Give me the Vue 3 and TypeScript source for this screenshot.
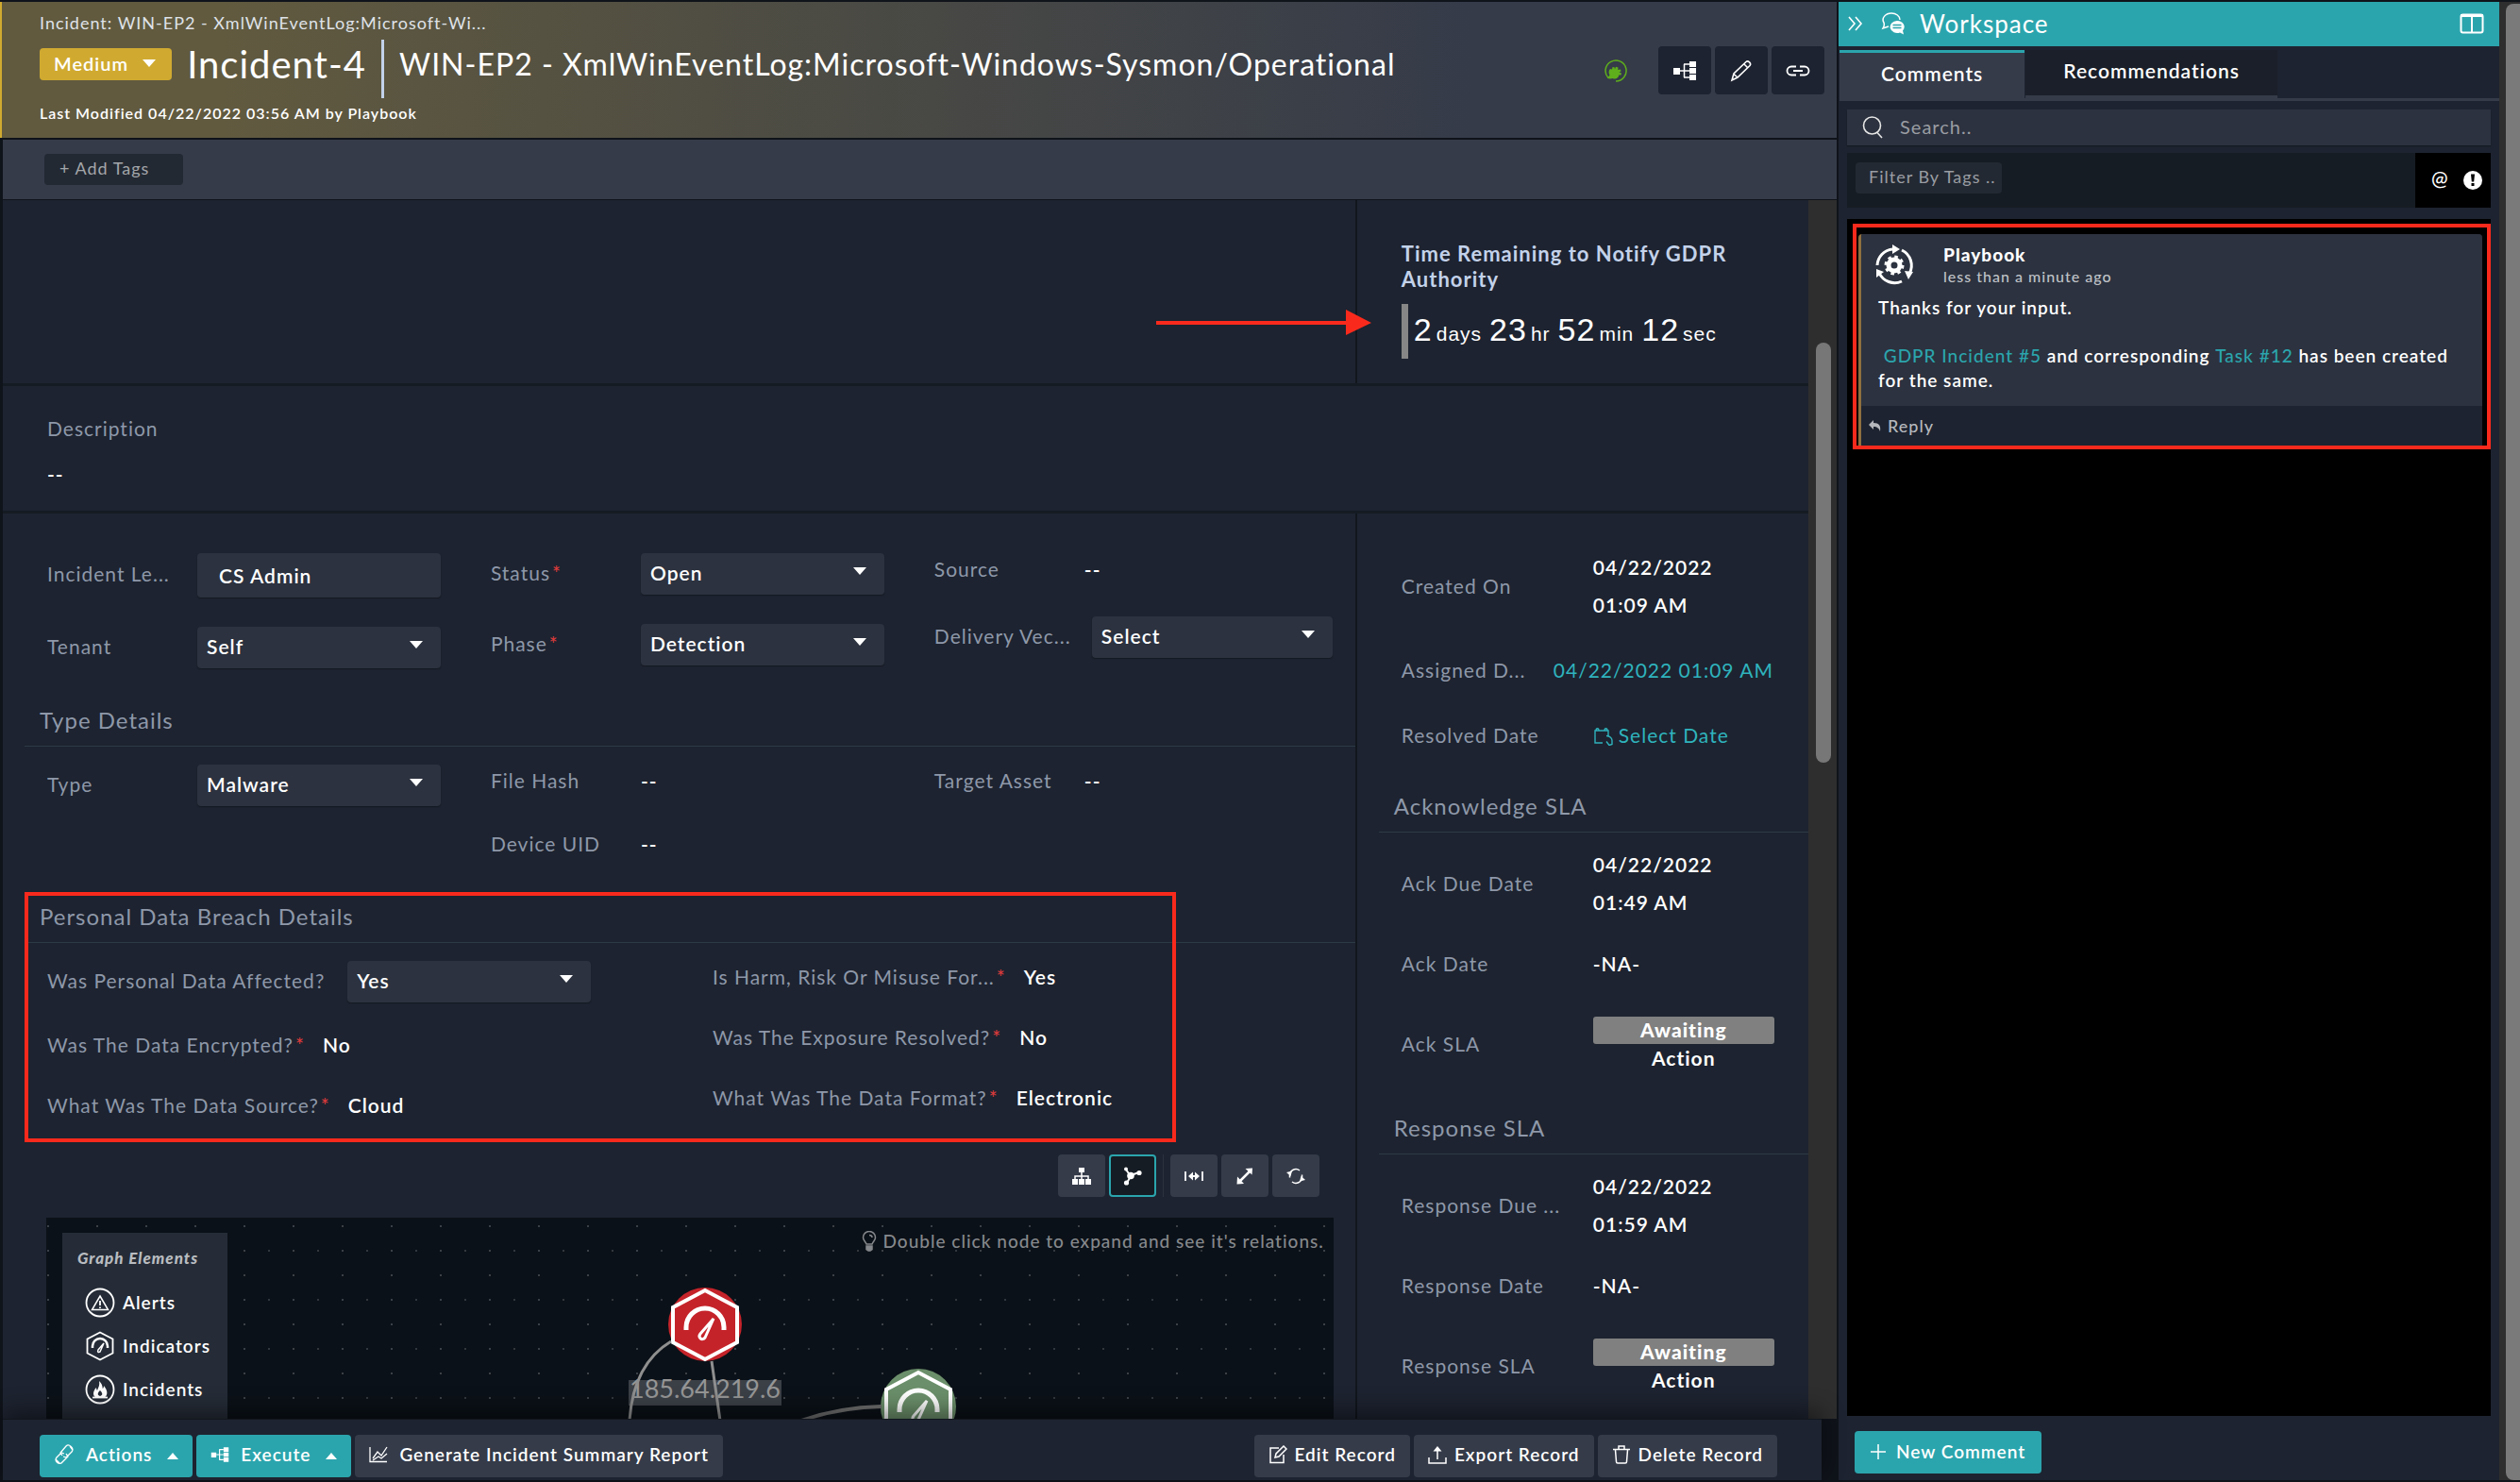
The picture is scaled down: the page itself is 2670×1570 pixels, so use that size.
<script setup lang="ts">
import { ref } from 'vue'

interface Field {
  id: string
  label: string
  value: string
  kind: 'text' | 'select' | 'input'
  required?: boolean
}

interface SideField {
  label: string
  value: string
  kind: 'dual' | 'text' | 'wide' | 'pick' | 'badge'
}

const mainColumns: Field[][] = [
  [
    { id: 'lead', label: 'Incident Le...', value: 'CS Admin', kind: 'input' },
    { id: 'tenant', label: 'Tenant', value: 'Self', kind: 'select' },
  ],
  [
    { id: 'status', label: 'Status', value: 'Open', kind: 'select', required: true },
    { id: 'phase', label: 'Phase', value: 'Detection', kind: 'select', required: true },
  ],
  [
    { id: 'source', label: 'Source', value: '--', kind: 'text' },
    { id: 'vector', label: 'Delivery Vec...', value: 'Select', kind: 'select' },
  ],
]

const typeColumns: Field[][] = [
  [{ id: 'type', label: 'Type', value: 'Malware', kind: 'select' }],
  [
    { id: 'hash', label: 'File Hash', value: '--', kind: 'text' },
    { id: 'uid', label: 'Device UID', value: '--', kind: 'text' },
  ],
  [{ id: 'asset', label: 'Target Asset', value: '--', kind: 'text' }],
]

const breachColumns: Field[][] = [
  [
    { id: 'affected', label: 'Was Personal Data Affected?', value: 'Yes', kind: 'select' },
    { id: 'encrypted', label: 'Was The Data Encrypted?', value: 'No', kind: 'text', required: true },
    { id: 'datasource', label: 'What Was The Data Source?', value: 'Cloud', kind: 'text', required: true },
  ],
  [
    { id: 'harm', label: 'Is Harm, Risk Or Misuse For...', value: 'Yes', kind: 'text', required: true },
    { id: 'exposure', label: 'Was The Exposure Resolved?', value: 'No', kind: 'text', required: true },
    { id: 'format', label: 'What Was The Data Format?', value: 'Electronic', kind: 'text', required: true },
  ],
]

const sideGroups: { title: string; fields: SideField[] }[] = [
  {
    title: '',
    fields: [
      { label: 'Created On', value: '04/22/2022|01:09 AM', kind: 'dual' },
      { label: 'Assigned D...', value: '04/22/2022 01:09 AM', kind: 'wide' },
      { label: 'Resolved Date', value: 'Select Date', kind: 'pick' },
    ],
  },
  {
    title: 'Acknowledge SLA',
    fields: [
      { label: 'Ack Due Date', value: '04/22/2022|01:49 AM', kind: 'dual' },
      { label: 'Ack Date', value: '-NA-', kind: 'text' },
      { label: 'Ack SLA', value: 'Awaiting|Action', kind: 'badge' },
    ],
  },
  {
    title: 'Response SLA',
    fields: [
      { label: 'Response Due ...', value: '04/22/2022|01:59 AM', kind: 'dual' },
      { label: 'Response Date', value: '-NA-', kind: 'text' },
      { label: 'Response SLA', value: 'Awaiting|Action', kind: 'badge' },
    ],
  },
]

const countdown = [
  { n: '2', unit: 'days' },
  { n: '23', unit: 'hr' },
  { n: '52', unit: 'min' },
  { n: '12', unit: 'sec' },
]

const search = ref('')
</script>

<template>
  <div class="app">
    <div class="shell">
      <main class="record">
        <header class="head">
          <p class="crumb">Incident: WIN-EP2 - XmlWinEventLog:Microsoft-Wi...</p>
          <div class="title-row">
            <button class="severity">Medium
              <svg width="14" height="8" viewBox="0 0 14 8"><path d="M0 0h14L7 8z" fill="#fff" /></svg>
            </button>
            <span class="rec-id">Incident-4</span>
            <span class="divider"></span>
            <h1>WIN-EP2 - XmlWinEventLog:Microsoft-Windows-Sysmon/Operational</h1>
          </div>
          <p class="modified">Last Modified 04/22/2022 03:56 AM by Playbook</p>
          <div class="head-tools">
            <svg class="live" width="26" height="26" viewBox="0 0 26 26">
              <path d="M5 20.500A11 11 0 1 1 13 24" fill="none" stroke="#5fae1c" stroke-width="1.500" />
              <path d="M4 21l2.500-3.500c-1.500-2-1-5 .5-6.500l2 .5.500-2.500 2 .3.500 2 1-2.500 2.500.8-.3 2.500 2.800-.5.500 2-2 1 2.500.8-.5 2-2.300.2c0 3-3.500 5-6.500 3.500L7 21.500z" fill="#5fae1c" />
            </svg>
            <button class="tool" aria-label="Run">
              <svg width="26" height="22" viewBox="0 0 26 22"><path d="M1 8h7v7H1zM18 1h7v6h-7zM18 8h7v6h-7zM18 15h7v6h-7z" fill="#fff" /><path d="M8 11h10M12.500 4v14M12 4h6M12 18h6" stroke="#fff" stroke-width="1.500" fill="none" /></svg>
            </button>
            <button class="tool" aria-label="Edit">
              <svg width="24" height="24" viewBox="0 0 24 24" fill="none" stroke="#fff" stroke-width="1.600"><path d="M2 22l2-7L17 2.500c2-2 6 1.500 4 4L8 19zM4 15.500l4 3.500M15 5l4 4" /></svg>
            </button>
            <button class="tool" aria-label="Copy link">
              <svg width="26" height="12" viewBox="0 0 26 12" fill="none" stroke="#fff" stroke-width="1.800"><path d="M11 1.500H6a4.500 4.500 0 0 0 0 9h5M15 1.500h5a4.500 4.500 0 0 1 0 9h-5M8 6h10" /></svg>
            </button>
          </div>
        </header>
        <div class="tags"><button class="add-tags">+ Add Tags</button></div>

        <div class="pane">
          <div class="body">
            <div class="row notify">
              <div class="left">
                <svg class="arrow" width="228" height="28" viewBox="0 0 228 28"><path d="M0 12h201V0l27 14-27 13V16H0z" fill="#f92a1c" /></svg>
              </div>
              <div class="right">
                <h2>Time Remaining to Notify GDPR Authority</h2>
                <div class="countdown">
                  <span v-for="c in countdown" :key="c.unit" class="part"><b>{{ c.n }}</b><small>{{ c.unit }}</small></span>
                </div>
              </div>
            </div>

            <div class="row description">
              <p class="label">Description</p>
              <p class="value">--</p>
            </div>

            <div class="row details">
              <div class="left">
                <section class="fields three">
                  <div v-for="(col, i) in mainColumns" :key="i" class="col">
                    <div v-for="f in col" :key="f.id" class="field">
                      <label class="label" :for="f.id">{{ f.label }}<i v-if="f.required">*</i></label>
                      <input v-if="f.kind === 'input'" :id="f.id" type="text" :value="f.value" />
                      <span v-else-if="f.kind === 'select'" class="select">
                        <select :id="f.id"><option>{{ f.value }}</option></select>
                        <svg width="14" height="8" viewBox="0 0 14 8"><path d="M0 0h14L7 8z" fill="#fff" /></svg>
                      </span>
                      <output v-else :id="f.id" class="value">{{ f.value }}</output>
                    </div>
                  </div>
                </section>

                <h3>Type Details</h3>
                <section class="fields three">
                  <div v-for="(col, i) in typeColumns" :key="i" class="col">
                    <div v-for="f in col" :key="f.id" class="field">
                      <label class="label" :for="f.id">{{ f.label }}</label>
                      <span v-if="f.kind === 'select'" class="select">
                        <select :id="f.id"><option>{{ f.value }}</option></select>
                        <svg width="14" height="8" viewBox="0 0 14 8"><path d="M0 0h14L7 8z" fill="#fff" /></svg>
                      </span>
                      <output v-else :id="f.id" class="value">{{ f.value }}</output>
                    </div>
                  </div>
                </section>

                <div class="breach">
                  <h3>Personal Data Breach Details</h3>
                  <section class="fields two">
                    <div v-for="(col, i) in breachColumns" :key="i" class="col">
                      <div v-for="f in col" :key="f.id" class="field loose">
                        <label class="label" :for="f.id">{{ f.label }}<i v-if="f.required">*</i></label>
                        <span v-if="f.kind === 'select'" class="select">
                          <select :id="f.id"><option>{{ f.value }}</option></select>
                          <svg width="14" height="8" viewBox="0 0 14 8"><path d="M0 0h14L7 8z" fill="#fff" /></svg>
                        </span>
                        <output v-else :id="f.id" class="value">{{ f.value }}</output>
                      </div>
                    </div>
                  </section>
                  <div class="highlight"></div>
                </div>

                <div class="graph-tools">
                  <button aria-label="Hierarchy"><svg width="20" height="18" viewBox="0 0 20 18"><path d="M7 0h6v5H7zM0 12h6v6H0zM7 12h6v6H7zM14 12h6v6h-6z" fill="#fff" /><path d="M10 5v7M3 12V9h14v3" stroke="#fff" stroke-width="1.500" fill="none" /></svg></button>
                  <button class="on" aria-label="Network"><svg width="20" height="20" viewBox="0 0 20 20"><path d="M3 3l5 7-4 7M8 9l9-3" stroke="#fff" stroke-width="2" fill="none" /><g fill="#fff"><circle cx="3" cy="2.500" r="2" /><circle cx="8" cy="9.500" r="3.800" /><circle cx="17" cy="6.500" r="2.600" /><circle cx="3.500" cy="17" r="2.600" /></g></svg></button>
                  <span class="sep"></span>
                  <button aria-label="Fit width"><svg width="20" height="12" viewBox="0 0 20 12"><path d="M1 1v10M19 1v10M5 6h10" stroke="#fff" stroke-width="1.800" /><path d="M9 1.500v9L4 6zM11 1.500v9L16 6z" fill="#fff" /></svg></button>
                  <button aria-label="Expand"><svg width="18" height="18" viewBox="0 0 18 18"><path d="M3 15L15 3" stroke="#fff" stroke-width="2.500" /><path d="M9.500 1L17 .5l-.5 7zM.5 17.500l.5-8 7 7.500z" fill="#fff" /></svg></button>
                  <button aria-label="Refresh"><svg width="20" height="18" viewBox="0 0 20 18"><path d="M3.500 10.500V8A6.500 6.500 0 0 1 14 3M16.500 7.500V10A6.500 6.500 0 0 1 6 15" fill="none" stroke="#fff" stroke-width="1.500" /><path d="M0 5l6-1.500L4.500 9zM20 13l-6 1.500L15.500 9z" fill="#fff" /></svg></button>
                </div>

                <div class="graph">
                  <svg class="canvas" width="100%" height="100%">
                    <defs>
                      <pattern id="dots" width="52" height="52" patternUnits="userSpaceOnUse" y="8"><rect x="1" width="2" height="2" fill="#3b4047" /><rect x="1" y="26" width="2" height="2" fill="#3b4047" /><rect x="27" y="26" width="2" height="2" fill="#32373e" /></pattern>
                    </defs>
                    <rect width="100%" height="100%" fill="url(#dots)" />
                    <circle cx="698" cy="113" r="39" fill="#c5232a" />
                    <path d="M698 77l34 18v37l-34 18-34-18V95z" fill="none" stroke="#fff" stroke-width="4" />
                    <path d="M678 119v-3a20 20 0 0 1 40 0v3" fill="none" stroke="#fff" stroke-width="5" />
                    <path d="M707 107l-9 20c-3 4-8 0-5-4z" fill="none" stroke="#fff" stroke-width="3" />
                    <circle cx="924" cy="200" r="40" fill="#6b8f6a" />
                    <path d="M924 164l34 18v37l-34 18-34-18v-37z" fill="none" stroke="#fff" stroke-width="4" />
                    <path d="M904 206v-3a20 20 0 0 1 40 0v3" fill="none" stroke="#fff" stroke-width="5" />
                    <path d="M933 194l-9 20c-3 4-8 0-5-4z" fill="none" stroke="#fff" stroke-width="3" />
                    <rect x="617" y="172" width="162" height="27" fill="#3b4047" />
                    <text x="698" y="191" text-anchor="middle" class="node-text">185.64.219.6</text>
                    <g fill="none" stroke="#8f8f8f">
                      <path d="M662 131Q622 155 618 215M705 152L714 215" stroke-width="3" />
                      <path d="M800 215Q840 201 885 200" stroke-width="4" stroke="#6e6e6e" />
                    </g>
                  </svg>
                  <div class="legend">
                    <strong>Graph Elements</strong>
                    <span>
                      <svg width="32" height="32" viewBox="0 0 32 32" fill="none" stroke="#fff" stroke-width="1.800"><circle cx="16" cy="16" r="14.500" /><path d="M16 9l8.500 14.500h-17z" stroke-width="1.500" /><path d="M16 14v5M16 20.500v1.500" /></svg>Alerts</span>
                    <span>
                      <svg width="32" height="32" viewBox="0 0 32 32" fill="none" stroke="#fff" stroke-width="1.800"><path d="M16 1.500L29.500 8.500v15L16 30.500 2.500 23.500v-15z" /><path d="M8 18v-2a8 8 0 0 1 16 0v2" stroke-width="2.500" /><path d="M20 13l-4 9c-2 1-3 0-2-2z" stroke-width="1.500" /></svg>Indicators</span>
                    <span>
                      <svg width="32" height="32" viewBox="0 0 32 32" fill="none" stroke="#fff" stroke-width="1.800"><circle cx="16" cy="16" r="14.500" /><path d="M15 7c5 5 3 8 4 8 1-1 1-3 1-3 5 6 4 11 0 13h-8c-4-2-4-7 0-11 0 2 1 3 1 3 1-3 3-5 2-10z" fill="#fff" stroke="none" /><path d="M16 17c3 3 3 5 0 6-3-1-3-3 0-6z" fill="#252c37" stroke="none" /><path d="M8 24.500h16" /></svg>Incidents</span>
                  </div>
                  <p class="hint">
                    <svg width="16" height="22" viewBox="0 0 16 22" fill="none" stroke="#85888c" stroke-width="1.500"><path d="M5 14C4 11 1.500 10 1.500 7a6.500 6.500 0 0 1 13 0c0 3-2.500 4-3.500 7zM8 4.500c1.500 0 3 1 3 2.500" /><path d="M5 16h6v3.500l-2 1.500H7l-2-1.500z" fill="#85888c" /></svg>
                    Double click node to expand and see it's relations.
                  </p>
                </div>
              </div>

              <aside class="right">
                <template v-for="g in sideGroups" :key="g.title">
                  <h3 v-if="g.title">{{ g.title }}</h3>
                  <div class="group" :class="{ first: !g.title }">
                    <div v-for="f in g.fields" :key="f.label" class="side-field" :class="f.kind">
                      <span class="label">{{ f.label }}</span>
                      <span v-if="f.kind === 'dual'" class="value dual-value"><span v-for="p in f.value.split('|')" :key="p">{{ p }}</span></span>
                      <a v-else-if="f.kind === 'wide'" href="#">{{ f.value }}</a>
                      <a v-else-if="f.kind === 'pick'" href="#"><svg width="22" height="22" viewBox="0 0 22 22" fill="none" stroke="#2fb3bd" stroke-width="1.400"><path d="M10 19H2V6h14v6M6 6c0-3-3-3-3 0M15 6c0-3-3-3-3 0M14 11.500c4 0 6 3 6 5v4l-3 1-3-4" /></svg>{{ f.value }}</a>
                      <span v-else-if="f.kind === 'badge'" class="badge-value"><b>{{ f.value.split('|')[0] }}</b><span>{{ f.value.split('|')[1] }}</span></span>
                      <span v-else class="value">{{ f.value }}</span>
                    </div>
                  </div>
                </template>
              </aside>
            </div>
          </div>
          <div class="scroll"><div class="thumb"></div></div>
        </div>

        <footer class="foot">
          <button class="teal"><svg width="22" height="22" viewBox="0 0 22 22" fill="none" stroke="#fff" stroke-width="1.300"><path d="M9 12L7 9l6-7c3-3 9 2 6 6l-6 6-3-1M13 10l2 3-6 6c-3 4-9-1-6-5l5-5 3 1M17 2l3 4M2 16l4 4" /></svg>Actions<svg width="12" height="7" viewBox="0 0 12 7"><path d="M0 7h12L6 0z" fill="#fff" /></svg></button>
          <button class="teal"><svg width="20" height="18" viewBox="0 0 26 22"><path d="M1 8h7v7H1zM18 1h7v6h-7zM18 8h7v6h-7zM18 15h7v6h-7z" fill="#fff" /><path d="M8 11h10M12.500 4v14M12 4h6M12 18h6" stroke="#fff" stroke-width="1.500" fill="none" /></svg>Execute<svg width="12" height="7" viewBox="0 0 12 7"><path d="M0 7h12L6 0z" fill="#fff" /></svg></button>
          <button><svg width="20" height="18" viewBox="0 0 20 18" fill="none" stroke="#fff" stroke-width="1.300"><path d="M1 1v15.500h18M4 13l5-7 4 4 6-9M4 15l6-4 3 2 6-5" /></svg>Generate Incident Summary Report</button>
          <span class="spring"></span>
          <button class="tight"><svg width="20" height="20" viewBox="0 0 20 20" fill="none" stroke="#fff" stroke-width="1.500"><path d="M11 3H2v15.500h14V10M7 13l1-4 8-8 3 3-8 8z" /></svg>Edit Record</button>
          <button class="tight"><svg width="20" height="20" viewBox="0 0 20 20" fill="none" stroke="#fff" stroke-width="1.500"><path d="M1 13v6h18v-6M10 15V2" /><path d="M5.500 6.500L10 1l4.500 5.500z" fill="#fff" stroke="none" /></svg>Export Record</button>
          <button class="tight"><svg width="20" height="20" viewBox="0 0 20 20" fill="none" stroke="#fff" stroke-width="1.500"><path d="M1 4.500h18M7 4V1h6v3M3.500 5l1 12.500c0 1 .5 1.500 1.500 1.500h8c1 0 1.500-.5 1.500-1.500L16.500 5" /></svg>Delete Record</button>
        </footer>
      </main>

      <aside class="workspace">
        <header class="ws-head">
          <svg width="16" height="16" viewBox="0 0 16 16" fill="none" stroke="#fff" stroke-width="1.600"><path d="M1 1l6 7-6 7M8 1l6 7-6 7" /></svg>
          <svg width="26" height="24" viewBox="0 0 26 24"><path d="M8 15l-6 2c1-2 2-3 1-6C0 6 5 1 11 1c5 0 9 3 9 7" fill="none" stroke="#fff" stroke-width="1.500" /><path d="M17 9a7.500 6.500 0 1 0 3 12.500l4 2-1-4A7.500 6.500 0 0 0 17 9z" fill="#fff" /><path d="M12.500 13.500h9M12.500 16.500h9" stroke="#2ba5ad" stroke-width="1.500" /></svg>
          <h2>Workspace</h2>
          <svg width="26" height="22" viewBox="0 0 26 22"><rect x="1.500" y="1.500" width="23" height="19" rx="2" fill="none" stroke="#fff" stroke-width="2" /><path d="M1 1h24v3H1zM12 1h2v20h-2z" fill="#fff" /></svg>
        </header>
        <nav class="tabs">
          <button class="tab current">Comments</button>
          <button class="tab">Recommendations</button>
        </nav>
        <div class="ws-body">
          <label class="search">
            <svg width="22" height="24" viewBox="0 0 22 24" fill="none" stroke="#e6e6e6" stroke-width="1.600"><circle cx="10.500" cy="10" r="9" /><path d="M16 17.500l5 5.500" /></svg>
            <input v-model="search" type="text" placeholder="Search.." aria-label="Search comments" />
          </label>
          <div class="filter">
            <button class="filter-tag">Filter By Tags ..</button>
            <div class="filter-icons">
              <span>@</span>
              <svg width="20" height="20" viewBox="0 0 20 20"><circle cx="10" cy="10" r="10" fill="#fff" /><path d="M8 3.500h4l-.8 8H8.800zM8.500 13h3v3h-3z" fill="#000" /></svg>
            </div>
          </div>
          <div class="thread">
            <div class="frame">
              <article class="comment">
                <div class="message">
                  <div class="author">
                    <svg width="44" height="44" viewBox="0 0 44 44" fill="none" stroke="#fff" stroke-width="3"><path d="M4 22A18 18 0 0 1 20 5M30 6a18 18 0 0 1 8 25M30 39a18 18 0 0 1-24-9" /><path d="M20 0l8 5-8 5zM33 28l9 1-5 8zM3 26l8 3-8 6z" fill="#fff" stroke="none" /><circle cx="22" cy="22" r="6" stroke-width="5" /><circle cx="22" cy="22" r="9" stroke-width="3" stroke-dasharray="3.500 3.570" /></svg>
                    <div class="who"><strong>Playbook</strong><small>less than a minute ago</small></div>
                  </div>
                  <p>Thanks for your input.</p>
                  <p class="second">&nbsp;<a href="#">GDPR Incident #5</a> and corresponding <a href="#">Task #12</a> has been created<br />for the same.</p>
                </div>
                <button class="reply"><svg width="13" height="12" viewBox="0 0 13 12"><path d="M0 5l5-5v3c6 0 8 3 7 9-1-3-3-5-7-5v3z" fill="#b5b8bd" /></svg>Reply</button>
              </article>
            </div>
          </div>
          <button class="new"><svg width="16" height="16" viewBox="0 0 16 16" stroke="#fff" stroke-width="1.500"><path d="M8 0v16M0 8h16" /></svg>New Comment</button>
        </div>
      </aside>
    </div>
    <div class="page-scroll"><div></div></div>
  </div>
</template>

<style>
body { background: #1d2330; }
</style>

<style scoped>
* { box-sizing: border-box; }
.app {
  display: flex;
  height: 100vh;
  overflow: hidden;
  padding: 2px 0;
  background: #0f131a;
  color: #fff;
  font: 500 21px/26px Lato, "Liberation Sans", sans-serif;
  letter-spacing: 1px;
}
p, h1, h2, h3 { margin: 0; font-weight: inherit; }
button, input, select { font: inherit; letter-spacing: inherit; color: inherit; border: 0; margin: 0; }
button { cursor: pointer; display: flex; align-items: center; border-radius: 4px; white-space: nowrap; padding-bottom: 2px; }
svg { flex: none; }
a { color: #2ba5ad; text-decoration: none; }
.shell { flex: 1; min-width: 0; display: grid; grid-template-columns: minmax(0, 25fr) minmax(0, 9fr); }
.record { display: flex; flex-direction: column; min-width: 0; min-height: 0; border-right: 1px solid #0f131a; }

.head {
  position: relative;
  height: 144px;
  padding: 9px 14px 0 40px;
  border-left: 2px solid #d0aa30;
  background: linear-gradient(90deg, #615a3f 12%, #353b49 80%);
}
.crumb { font-size: 18px; font-weight: 400; color: #dfe2e8; }
.title-row { display: flex; align-items: center; height: 62px; margin-bottom: 8px; }
.severity { gap: 15px; height: 34px; padding: 0 17px 2px 15px; background: #d0aa30; font-size: 20px; font-weight: 600; }
.rec-id { margin-left: 16px; font-size: 40px; line-height: 44px; font-weight: 400; }
.divider { width: 3px; height: 62px; margin: 10px 16px 0; background: #c3d2ea; }
h1 { font-size: 32px; line-height: 40px; font-weight: 400; }
.modified { font-size: 16px; font-weight: 600; }
.head-tools { position: absolute; right: 13px; top: 47px; display: flex; align-items: center; gap: 4px; }
.live { margin-right: 28px; }
.tool { width: 56px; height: 51px; justify-content: center; padding: 0; background: #1d2330; }
.tags { display: flex; align-items: center; height: 63px; margin: 2px 0 1px 3px; padding-left: 44px; background: #353b49; }
.add-tags { width: 147px; height: 33px; padding: 0 16px 3px; background: #232932; color: #a3a6aa; font-size: 18px; font-weight: 400; }

.pane { flex: 1; min-height: 0; display: flex; overflow: hidden; margin-left: 3px; background: #1d2330; }
.body { flex: 1; min-width: 0; }
.scroll { width: 30px; padding-top: 151px; background: #2e2e2e; }
.thumb { width: 16px; height: 445px; margin-left: 8px; border-radius: 8px; background: #777; }
.row { border-bottom: 3px solid #151b22; }
.notify, .details { display: grid; grid-template-columns: minmax(0, 3fr) minmax(0, 1fr); }
.left { border-right: 2px solid #11161d; }
.notify { height: 197px; }
.notify .left { display: flex; justify-content: flex-end; padding-top: 116px; position: relative; }
.arrow { position: absolute; right: -17px; }
.notify .right { padding: 43px 30px 0 47px; }
.notify h2 { font-size: 22px; line-height: 27px; font-weight: 700; color: #c3d2ea; }
.countdown { display: flex; align-items: center; gap: 8px; height: 58px; margin-top: 13px; padding-left: 6px; border-left: 7px solid #868686; font-family: "Liberation Sans", Arial, sans-serif; }
.part { display: flex; align-items: baseline; gap: 4px; white-space: nowrap; line-height: 40px; }
.part b { font-size: 34px; font-weight: 400; }
.part small { font-size: 21px; font-weight: 400; }
.description { height: 135px; padding: 32px 47px 0; }
.description .value { margin-top: 22px; }
.label { color: #8e98a9; font-weight: 400; white-space: nowrap; }
.field .label { padding-bottom: 3px; }
.label i { color: #e23c3c; font-style: normal; margin-left: 2px; }
.value { font-weight: 600; white-space: nowrap; }

.details .left { padding-left: 23px; }
.fields { display: grid; }
.three { grid-template-columns: repeat(3, minmax(0, 1fr)); }
.two { grid-template-columns: repeat(2, minmax(0, 1fr)); }
.details .left > .fields:first-child { padding-top: 42px; }
.col { display: flex; flex-direction: column; gap: 31px; padding: 0 29px 0 24px; }
.three .col:last-child { padding-right: 24px; }
.three .col:last-child .select { margin-left: 8px; }
.two .col { gap: 28px; }
.field { display: flex; align-items: center; min-height: 36px; }
.field .label { flex: 0 0 159px; }
.field .value { padding-bottom: 2px; }
.field.loose .label { flex-basis: auto; margin-right: 19px; }
.field input, .select { flex: 1; min-width: 0; border-radius: 4px; background: #2c323f; font-weight: 600; box-shadow: 0 1px 1px #151a22; }
.field input { height: 47px; padding: 0 23px; }
.select { display: grid; align-items: center; height: 44px; }
.loose .select { flex: 0 0 258px; margin-left: 5px; }
.select > * { grid-area: 1 / 1; }
.select select { appearance: none; width: 100%; height: 44px; padding: 0 10px 3px; background: transparent; }
.select svg { justify-self: end; margin: 0 19px 6px 0; pointer-events: none; }
h3 { margin-top: 40px; padding: 0 16px 12px; border-bottom: 1px solid #2c3a45; font-size: 24px; line-height: 30px; color: #8e98a9; font-weight: 400; }
h3 + .fields { padding-top: 19px; }
.breach { position: relative; padding-top: 3px; }
.highlight { position: absolute; left: 0; right: 190px; top: 32px; bottom: -20px; border: 4px solid #f92a1c; pointer-events: none; }
.graph-tools { display: flex; justify-content: flex-end; gap: 4px; margin: 33px 38px 22px 0; }
.graph-tools button { width: 50px; height: 45px; justify-content: center; padding: 0; background: #353b49; }
.graph-tools .on { background: #151c23; border: 2px solid #2ba5ad; }
.sep { width: 1px; margin: 0 3px; background: #2b313d; }
.graph { position: relative; height: 600px; margin: 0 23px; padding: 13px 10px 0 17px; background: #0b1118; display: flex; justify-content: space-between; align-items: flex-start; font-size: 19px; }
.canvas { position: absolute; inset: 0; }
.node-text { font: 27px Lato, sans-serif; letter-spacing: 0; fill: #969696; }
.legend { position: relative; width: 175px; height: 500px; margin-top: 3px; padding-top: 14px; background: #252c37; display: flex; flex-direction: column; gap: 14px; font-weight: 600; }
.legend strong { padding-left: 16px; font-size: 17px; font-style: italic; color: #b9bcc0; margin-bottom: 4px; }
.legend span { display: flex; align-items: center; gap: 8px; padding-left: 24px; height: 32px; }
.hint { position: relative; display: flex; align-items: center; gap: 7px; color: #85888c; height: 24px; font-weight: 500; }

.details .right h3 { margin-left: 23px; }
.group { padding: 14px 0 0 47px; display: flex; flex-direction: column; gap: 25px; }
.group.first { padding-top: 37px; gap: 29px; }
.side-field { display: flex; align-items: center; min-height: 40px; }
.side-field .label { flex: 0 0 203px; }
.side-field.wide .label { flex-basis: 161px; }
.side-field a { display: flex; align-items: center; gap: 5px; color: #2fb3bd; white-space: nowrap; font-weight: 400; }
.dual-value { display: grid; line-height: 40px; }
.badge { margin: 11px 0 6px; }
.badge-value { display: grid; width: 192px; text-align: center; font-weight: 700; row-gap: 2px; }
.badge-value b { height: 29px; line-height: 28px; border-radius: 3px; background: #808080; }

.foot { position: relative; display: flex; align-items: center; gap: 4px; height: 65px; margin: 0 16px 0 3px; padding: 12px 47px 0 39px; background: #1d2330; border-top: 1px solid #11161d; box-shadow: 0 -8px 24px rgba(0, 0, 0, 0.45); font-size: 19px; font-weight: 600; }
.foot button { height: 45px; padding: 0 15px 2px; gap: 12px; background: #353b49; }
.foot button.teal { background: #2ba5ad; }
.foot button.teal svg:last-child { margin: 3px 0 0 4px; }
.foot button.tight { gap: 8px; }
.spring { flex: 1; }

.workspace { display: flex; flex-direction: column; min-width: 0; background: #1d2330; border-left: 1px solid #0f131a; }
.ws-head { display: flex; align-items: center; height: 47px; padding: 0 16px 2px 10px; background: #2ba5ad; }
.ws-head h2 { flex: 1; margin-left: 15px; font-size: 26px; line-height: 32px; font-weight: 400; }
.ws-head svg:nth-child(2) { margin-left: 19px; }
.tabs { display: flex; align-items: flex-start; height: 58px; padding-top: 4px; margin-left: 1px; font-weight: 600; border-bottom: 3px solid #353b49; }
.tab { justify-content: center; border-radius: 0; background: #1a1f29; height: 51px; padding: 0 40px 4px; margin-left: 1px; border-bottom: 3px solid #353b49; }
.tab.current { padding: 0 44px 2px; background: #353b49; border-top: 3px solid #2ba5ad; margin-left: 0; }
.ws-body { flex: 1; min-height: 0; display: flex; flex-direction: column; align-items: stretch; padding: 9px 9px 7px; font-size: 19px; }
.search { display: flex; align-items: center; gap: 18px; height: 38px; padding: 0 16px; background: #2c323f; box-shadow: 0 1px 1px #151a22; font-size: 20px; }
.search input { flex: 1; min-width: 0; padding: 0 0 3px; background: transparent; outline: 0; font-weight: 400; }
.search input::placeholder { color: #9a9da3; opacity: 1; }
.filter { display: flex; height: 58px; margin-top: 8px; background: #161c23; }
.filter-tag { align-self: flex-start; height: 33px; margin: 10px 0 0 9px; padding: 0 6px 3px 14px; background: #232932; color: #9a9da3; font-size: 18px; font-weight: 400; }
.filter-icons { display: flex; align-items: center; justify-content: space-between; width: 80px; margin-left: auto; padding: 0 9px 0 17px; background: #000; }
.filter-icons span { font-size: 21px; padding-bottom: 4px; }
.thread { flex: 1; margin-top: 12px; padding: 5px 0 0 6px; background: #000; }
.frame { padding: 7px 5px 0 2px; border: 4px solid #f92a1c; }
.comment { border-left: 3px solid #8f7040; background: #1d2330; border-radius: 4px 4px 0 0; overflow: hidden; }
.message { height: 182px; padding: 7px 16px 0 18px; background: #2c323f; font-weight: 600; }
.author { display: flex; align-items: center; height: 52px; margin-left: -5px; }
.who { display: grid; margin-left: 30px; line-height: 23px; }
.who small { font-size: 16px; font-weight: 500; color: #bfc2c7; }
.message p { margin-top: 6px; }
.message .second { margin-top: 25px; }
.message a { font-weight: 500; }
.reply { height: 42px; padding: 0 8px; gap: 7px; background: transparent; color: #b5b8bd; font-size: 18px; }
.new { align-self: flex-start; height: 45px; margin: 16px 0 0 8px; padding: 0 17px 2px; gap: 11px; background: #2ba5ad; font-weight: 600; }
.page-scroll { flex: none; width: 22px; padding: 2px 0 0 7px; background: #2e2e2e; }
.page-scroll div { height: 100%; border-radius: 8px 0 0 8px; background: #7a7a7a; }
</style>
